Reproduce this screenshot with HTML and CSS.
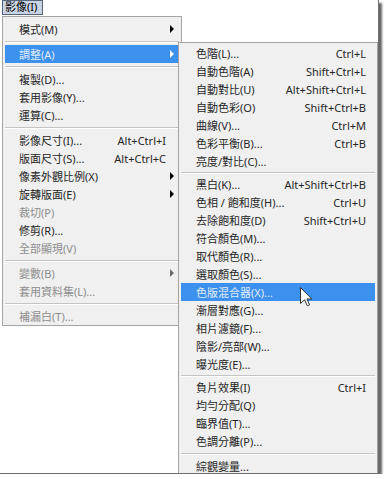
FILE: index.html
```html
<!DOCTYPE html>
<html>

<head>
	<title>影像 - 調整</title>
	<meta charset="UTF-8">
	<meta name="viewport" content="width=device-width, initial-scale=1.0">
	<link rel="stylesheet" href="styles.css">
</head>

<body>
	<div class="shot">
		<div class="menubar">
			<span class="menu-title">影像(I)</span>
		</div>

		<ul class="menu main-menu">
			<li class="item"><span class="label">模式(M)</span><span class="tail"><i class="arrow"></i></span></li>
			<li class="sep"></li>
			<li class="item active"><span class="label">調整(A)</span><span class="tail"><i class="arrow"></i></span></li>
			<li class="sep"></li>
			<li class="item"><span class="label">複製(D)...</span><span class="tail"></span></li>
			<li class="item"><span class="label">套用影像(Y)...</span><span class="tail"></span></li>
			<li class="item"><span class="label">運算(C)...</span><span class="tail"></span></li>
			<li class="sep"></li>
			<li class="item"><span class="label">影像尺寸(I)...</span><span class="key">Alt+Ctrl+I</span><span class="tail"></span></li>
			<li class="item"><span class="label">版面尺寸(S)...</span><span class="key">Alt+Ctrl+C</span><span class="tail"></span></li>
			<li class="item"><span class="label">像素外觀比例(X)</span><span class="tail"><i class="arrow"></i></span></li>
			<li class="item"><span class="label">旋轉版面(E)</span><span class="tail"><i class="arrow"></i></span></li>
			<li class="item disabled"><span class="label">裁切(P)</span><span class="tail"></span></li>
			<li class="item"><span class="label">修剪(R)...</span><span class="tail"></span></li>
			<li class="item disabled"><span class="label">全部顯現(V)</span><span class="tail"></span></li>
			<li class="sep"></li>
			<li class="item disabled"><span class="label">變數(B)</span><span class="tail"><i class="arrow"></i></span></li>
			<li class="item disabled"><span class="label">套用資料集(L)...</span><span class="tail"></span></li>
			<li class="sep"></li>
			<li class="item disabled"><span class="label">補漏白(T)...</span><span class="tail"></span></li>
		</ul>

		<!-- submenu of 調整(A), opened over the main menu -->
		<ul class="menu sub-menu">
			<li class="item"><span class="label">色階(L)...</span><span class="key">Ctrl+L</span></li>
			<li class="item"><span class="label">自動色階(A)</span><span class="key">Shift+Ctrl+L</span></li>
			<li class="item"><span class="label">自動對比(U)</span><span class="key">Alt+Shift+Ctrl+L</span></li>
			<li class="item"><span class="label">自動色彩(O)</span><span class="key">Shift+Ctrl+B</span></li>
			<li class="item"><span class="label">曲線(V)...</span><span class="key">Ctrl+M</span></li>
			<li class="item"><span class="label">色彩平衡(B)...</span><span class="key">Ctrl+B</span></li>
			<li class="item"><span class="label">亮度/對比(C)...</span></li>
			<li class="sep"></li>
			<li class="item"><span class="label">黑白(K)...</span><span class="key">Alt+Shift+Ctrl+B</span></li>
			<li class="item"><span class="label">色相 / 飽和度(H)...</span><span class="key">Ctrl+U</span></li>
			<li class="item"><span class="label">去除飽和度(D)</span><span class="key">Shift+Ctrl+U</span></li>
			<li class="item"><span class="label">符合顏色(M)...</span></li>
			<li class="item"><span class="label">取代顏色(R)...</span></li>
			<li class="item"><span class="label">選取顏色(S)...</span></li>
			<li class="item active"><span class="label">色版混合器(X)...</span></li>
			<li class="item"><span class="label">漸層對應(G)...</span></li>
			<li class="item"><span class="label">相片濾鏡(F)...</span></li>
			<li class="item"><span class="label">陰影/亮部(W)...</span></li>
			<li class="item"><span class="label">曝光度(E)...</span></li>
			<li class="sep"></li>
			<li class="item"><span class="label">負片效果(I)</span><span class="key">Ctrl+I</span></li>
			<li class="item"><span class="label">均勻分配(Q)</span></li>
			<li class="item"><span class="label">臨界值(T)...</span></li>
			<li class="item"><span class="label">色調分離(P)...</span></li>
			<li class="sep wide"></li>
			<li class="item"><span class="label">綜觀變量...</span></li>
		</ul>

		<svg class="cursor" width="13" height="20" viewBox="0 0 13 20">
			<path d="M0.5 0.5 L0.5 16.5 L4.5 12.8 L7.3 18.8 L9.6 17.8 L6.9 12 L11.8 12 Z" fill="#fff" stroke="#333" stroke-width="1" stroke-linejoin="round" />
		</svg>
	</div>
</body>

</html>
```

FILE: styles.css
```css
* {
	box-sizing: border-box;
}

body {
	margin: 0;
	background-color: #fff;
	font-family: "Noto Sans", "Noto Sans CJK TC", sans-serif;
	font-size: 11px;
	color: #262626;
}

.shot {
	position: relative;
	width: 379px;
	height: 474px;
	overflow: hidden;
	background-color: #fff;
	border-right: 1px solid #6f6f6f;
	border-bottom: 1px solid #6f6f6f;
	box-shadow: 3px 3px 2px rgba(0, 0, 0, 0.6);
}

.menubar {
	display: flex;
	height: 15px;
	padding-left: 2px;
}

.menu-title {
	width: 41px;
	height: 15px;
	padding-left: 2px;
	border: 1px solid #56657c;
	background-color: #c8d4e4;
	line-height: 12px;
	color: #000;
}

.menu {
	list-style: none;
	margin: 0;
	padding: 3px 0 0;
	background-color: #f0f0f0;
	border: 1px solid #a3a3a3;
}

.main-menu {
	width: 180px;
	margin: 1px 0 0 2px;
}

.item {
	display: flex;
	align-items: center;
	height: 18px;
	margin: 0 2px;
	padding-left: 14px;
	white-space: nowrap;
}

.label {
	flex: 1;
}

.tail {
	display: flex;
	align-items: center;
	width: 13px;
	height: 100%;
}

.arrow {
	margin-left: 4px;
	border-left: 4px solid #000;
	border-top: 4px solid transparent;
	border-bottom: 4px solid transparent;
}

.active {
	background-color: #3c90ee;
	color: #e3edfa;
}

.active .arrow {
	border-left-color: #f4f8ff;
}

.disabled {
	color: #8d8d8d;
}

.disabled .arrow {
	border-left-color: #6d6d6d;
}

.sep {
	display: flex;
	align-items: center;
	height: 7px;
	margin: 0 2px;
}

.sep::before {
	content: "";
	flex: 1;
	border-top: 1px solid #c4c4c4;
	border-bottom: 1px solid #fff;
}

.sub-menu {
	position: absolute;
	left: 178px;
	top: 42px;
	width: 200px;
	padding-top: 1px;
}

.sub-menu .item {
	padding: 0 9px 0 15px;
}

.sub-menu .sep {
	height: 5px;
}

.sub-menu .sep.wide {
	height: 7px;
}

.cursor {
	position: absolute;
	left: 300px;
	top: 287px;
}
```
